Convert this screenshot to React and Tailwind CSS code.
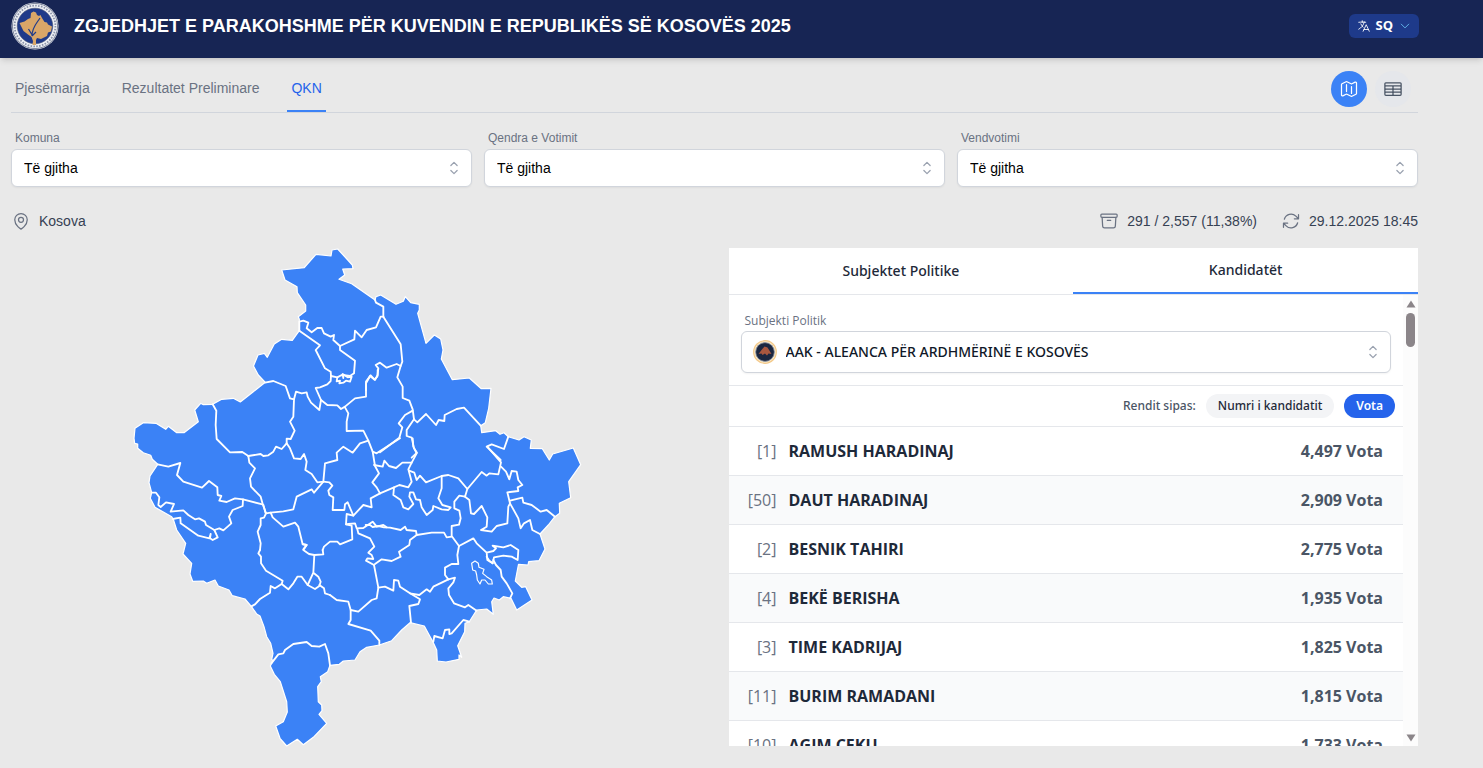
import { useState } from 'react';
import {
  HiOutlineArchiveBox,
  HiOutlineArrowPath,
  HiOutlineChevronDown,
  HiOutlineChevronUpDown,
  HiOutlineLanguage,
  HiOutlineMap,
  HiOutlineMapPin,
  HiOutlineTableCells,
} from 'react-icons/hi2';

const tabs = ["Pjesëmarrja", "Rezultatet Preliminare", "QKN"];

const filters = [
  { id: "komuna", label: "Komuna" },
  { id: "qendra", label: "Qendra e Votimit" },
  { id: "vendvotimi", label: "Vendvotimi" },
];

const candidates = [
  { number: 1, name: "RAMUSH HARADINAJ", votes: 4497 },
  { number: 50, name: "DAUT HARADINAJ", votes: 2909 },
  { number: 2, name: "BESNIK TAHIRI", votes: 2775 },
  { number: 4, name: "BEKË BERISHA", votes: 1935 },
  { number: 3, name: "TIME KADRIJAJ", votes: 1825 },
  { number: 11, name: "BURIM RAMADANI", votes: 1815 },
  { number: 10, name: "AGIM ÇEKU", votes: 1733 },
];

// outer border of Kosovo
const outline =
  "281.7,270 304.3,267.7 316,254.3 331,256 332,250 337.7,249 352.3,265 353,268.7 342.7,269 344.7,275 339,279.3 351.7,283.7 375,300 376,296.7 380.7,295 396,304.3 403.3,301.3 405.3,296.7 410.7,302.7 419.3,304.3 419.3,310 417.7,313.3 426,343.3 434.3,335 440.7,339 443,350 441.3,359 452.3,379.7 469.3,378 481.3,388.7 491,388.3 488.7,408.3 485.3,422.7 480.7,425.7 481.7,432.7 495.7,430.7 500,434.3 504,432.7 508.3,436.7 519,440 524,436.7 531.3,440 530.3,448.3 542.3,448.7 549.3,460 552.7,454 573.3,448 580.7,464.7 568.7,481.7 570.7,497.7 559.3,503.3 559.7,513.3 554.3,517.3 548.3,525 540,534 545,549 539,560.7 528.7,561.7 528,565 518.5,564.3 515.3,581 521.7,587.3 525.7,586.7 532,600 516.7,610 511,598.3 503.3,596.7 499.3,600 494,598 491.7,601.7 493.3,614.3 486.7,609 476.7,610 469.3,621.7 465,623.3 464.7,631.7 457.7,645.7 461.7,657.3 459,655 459,659.3 446,662 437.3,661 436.7,650 433,642 424.3,626 410,622.7 401.7,630 391.7,640.7 379.3,645 366.7,647.3 360,651.7 355,660 343.3,661 339.3,664.3 330,665.3 327.7,671.7 320.3,676.7 321.3,681.7 317.7,686.7 318.3,701.7 321.7,705 322,710.7 319,714.3 326.7,723.3 313.3,737.3 303.3,744.7 297.3,739.3 286.7,746 280,738.3 275.7,726 283.3,721.7 287.3,712 286.7,701.7 280.3,681.7 274.3,674.3 270.3,666 273,660.7 271.7,659.3 273,653.3 270.7,643.3 266.7,636.7 264,626.7 260,616 256.7,614 251.3,606.3 245,599 232.3,595.7 229,590 218.3,586 215,580 206.7,583.3 203.3,581 192.7,581.3 190,574 191.7,563.3 183,554 185.7,543.3 176.7,530 173.3,519.3 171.7,516.7 155,507.3 150.3,498.3 151.7,492.7 149,482.7 150,476 157.7,464.3 152.3,459.3 150.7,455.3 143.3,452.7 137.7,448.3 137.7,444 134.7,443.3 134,438.3 135,428.3 143.3,422.7 156,423.3 165.7,429.3 168.3,426.3 176.7,432.7 184,432.7 198.3,421.7 194.7,410 200.7,403.3 203.3,404.7 212.7,404.3 221.7,399.3 233.3,398.3 240.3,402 253.3,391.7 265.3,382.3 258.3,375 253.5,366 258,355 264.3,353.3 267.3,357.3 274.3,344 281.7,339.3 292.3,340.3 299.3,330.7 299.3,319.3 298.3,316.7 305.7,311 305.7,305 297.3,292.7 297,286.7 285,280";

// municipality borders, grouped by part of the map
const borders = [
  {
    area: "north",
    origin: "translate(780 720)",
    lines: [
      "345,180 348,188 370,200 370,230",
      "370,230 362,230 348,262 320,270 305,292 285,272 283,298 240,318 220,300 222,285 212,290 192,280 185,264 172,264 155,277 140,265 145,248 130,242 118,245 118,272",
      "370,230 422,313 427,365 422,378 410,372 380,383 360,368 347,375 355,385 352,410 343,418 332,406 318,425 318,450",
      "118,272 180,316 167,330 195,385 212,395 213,408",
      "240,318 240,330 285,362 282,400 270,408 258,406 245,405 232,412 213,408",
      "232,412 230,424 240,422 238,430 250,428 258,422 270,425 275,410 263,412 248,402 250,414",
    ],
  },
  {
    area: "north-east",
    origin: "translate(1140 870)",
    lines: [
      "62,228 52,262 68,290 68,324 88,332 98,358 102,388",
      "102,388 112,397 138,372 168,405 176,390 193,393 194,375 230,357 252,353 302,407",
      "98,362 75,375 56,400 67,412 58,443 0,487",
      "102,388 80,420 80,438 95,443 102,475 111,488 95,503",
      "385,440 372,477 335,463 320,470 362,510",
    ],
  },
  {
    area: "west",
    origin: "translate(360 1110)",
    lines: [
      "278,103 289,122 287,165 290,207 330,247 367,246 385,258",
      "113,283 145,290 181,279 171,315 190,335 246,353 267,333 292,352 293,375 304,378 298,392 320,396 345,385 369,388 430,404 437,430",
      "369,388 368,408 338,420 327,440 334,460 310,481 298,475 283,480",
      "95,368 108,368 118,382 115,405 122,411 138,397 162,402 152,425 190,421 205,435 225,448 237,445 255,455 258,465 283,480 293,502 278,510 270,505 272,492 268,505 235,497 182,460 181,443 158,447",
    ],
  },
  {
    area: "centre",
    origin: "translate(720 1110)",
    lines: [
      "75,38 100,33 137,48 150,85 162,88 160,140 150,155 164,182 152,207 140,206 140,220",
      "162,88 168,65 185,70 200,67 203,80 213,98 238,120 243,90 227,54 240,52 262,43 272,33 273,18",
      "243,90 262,105 292,106 303,117 315,110 345,85 378,80 378,40 390,18 405,30 413,15 413,0",
      "315,112 325,130 320,155 320,183 370,182 385,212 398,245 410,250 480,205",
      "385,212 360,220 338,248 310,230 290,248 292,270 255,280 250,335 232,337 215,312 196,300 200,275 192,252 182,267 162,265 150,235 140,220",
      "140,220 125,237 108,230 100,245 85,256 70,258 62,252 25,258",
      "25,258 28,278 45,295 30,325 33,350 62,380 68,402 78,430 92,428 130,424 160,418 170,380 215,358 222,368 250,335",
      "78,430 72,443 62,445 62,465 53,485 62,520 60,540",
      "92,428 98,442 130,470 165,458 175,470 188,523 200,525 190,538",
      "250,335 268,337 277,347 265,362 268,375 280,382 278,420 313,420 315,403 323,397 340,437 370,405 395,412 392,385 420,370",
      "398,245 405,288 417,310 397,337 410,352 420,370",
      "340,437 320,432 318,463 335,467 337,508 300,523 292,515 270,515 252,530 248,540",
      "318,463 325,462 345,460 350,475 370,474 398,455 410,470 430,465 440,472",
    ],
  },
  {
    area: "east",
    origin: "translate(1110 1290)",
    lines: [
      "12,105 38,110 43,92 57,108 78,114 97,98 125,98",
      "30,190 72,172 88,165 115,172 125,155 117,125 115,118 125,98 140,70 130,50 128,25",
      "117,122 133,128 140,150 150,137 168,157 215,138 235,135 265,145 292,177 335,126 350,137 358,130 385,133 393,97 352,50",
      "215,138 215,175 205,205 217,225 242,232 235,240 215,238 190,228 188,240 170,255 155,232 150,210 138,208 130,187 120,187 118,200 130,222 115,238 100,232 92,210 70,195 72,172",
      "292,177 285,200 268,197 253,215 253,235 268,242 272,265 267,284 245,288 245,318 267,348",
      "285,200 298,210 303,250 312,252 335,228 352,262 350,290 333,300 365,305 380,288 412,280 415,230 420,220 412,187 445,183 443,172 457,165 445,150 440,125 425,123 418,148 408,125 393,110",
      "420,212 457,203 460,218 485,225 512,245 530,240 555,260",
      "420,220 445,265 452,295 462,280 480,270 487,300 510,312",
      "-13,285 0,285 8,291 25,288 42,292 60,293 92,300 105,290 110,300 138,303 140,315 185,308 222,308 230,322 245,320",
      "140,315 120,330 118,345 87,365 92,380 65,393 35,388 15,402",
      "267,348 310,325 320,340 350,368 370,363 378,355 368,347 400,352 422,345 445,360 443,390 425,380 400,377 372,382 368,400 352,390 350,368",
    ],
  },
  {
    area: "south-east",
    origin: "translate(990 1560)",
    lines: [
      "387,78 382,105 385,132 365,132 345,143 345,165 355,178",
      "355,178 335,188 310,200 300,215 290,208 268,225 240,220 210,200 205,182 192,180 190,212 165,200 145,203 132,135",
      "355,178 375,173 370,187 355,205 357,225 372,250 405,262 415,255 440,272",
      "132,135 108,122 112,115 130,117 125,105 115,98 133,80 120,55 85,40 82,28",
      "145,203 140,235 125,240 85,275 62,270 62,300 55,312 122,332 148,362 148,375",
      "0,225 20,240 55,245 62,270",
      "240,220 270,238 265,252 238,258 243,308",
      "310,365 313,348 338,355 345,330 358,328 358,342 365,340 400,300 418,305",
      "490,120 498,135 512,150 515,170 530,190 547,220 540,235",
      "488,130 478,122 470,110",
    ],
  },
  {
    area: "south",
    origin: "translate(480 1500)",
    lines: [
      "488,150 490,163 463,165 447,162 430,150 440,135 428,132",
      "463,165 460,218 475,230 482,245 478,258 465,267 443,255 460,218",
      "300,150 295,160 303,170 303,190 318,212 368,242 365,252 385,268 400,250 412,230 425,230 443,255",
      "365,252 345,265 332,258 330,278 300,297 285,313 274,319",
      "478,255 492,265 495,280 510,285",
      "334,490 355,463 370,460 375,450 400,432 440,426 455,438 478,440 495,432 505,460 510,496",
    ],
  },
];

const KosovoMap = () => (
  <svg viewBox="393 744 1350 1494" className="h-full max-w-full overflow-visible" role="img" aria-label="Kosova">
    <polygon points={outline} transform="scale(3)" fill="#3b82f6" stroke="#fff" strokeWidth="1.2" strokeLinejoin="round" />
    <g fill="none" stroke="#fff" strokeWidth="5.5" strokeLinejoin="round" strokeLinecap="round">
      {borders.map((part) => (
        <g key={part.area} transform={part.origin}>
          {part.lines.map((points) => (
            <polyline key={points} points={points} />
          ))}
        </g>
      ))}
      {/* small enclave in the south-east */}
      <polygon
        transform="translate(990 1560)"
        strokeWidth="3.5"
        points="425,130 435,123 445,130 447,142 462,148 458,160 470,170 485,180 487,192 475,192 465,180 455,180 450,192 442,180 440,165 437,153 428,150"
      />
    </g>
  </svg>
)

const Emblem = () => (
  <svg viewBox="0 0 48 48" className="size-12 shrink-0" aria-hidden="true">
    <circle cx="24" cy="24" r="23.5" fill="#eef0f4" />
    <circle cx="24" cy="24" r="22.6" fill="none" stroke="#4b5675" strokeWidth="0.7" />
    <circle cx="24" cy="24" r="20.4" fill="none" stroke="#8d95ab" strokeWidth="1.8" strokeDasharray="1.6 1.3" />
    <circle cx="24" cy="24" r="17.8" fill="#1f3a8a" stroke="#4b5675" strokeWidth="0.6" />
    <path
      d="M20 11l2.500-1.500 2.500 1 1 2.500 2 1 1.500-1 1.500 3 2.500 4 2.500.5 1 2 4 2-1 5-3 1-1 3.500-3 1.500-3 1.500-4-1-1 2v5h-3.500l.5-4-1.500-4-3.500-2.500-4.500-3.500-2-4-2-4 5-1.500 3.500-2.500 2.500-1z"
      fill="#d9a668"
    />
    <path d="M29 16c-3 5-8 9-8 18M17.500 27l4 6.500 3.500-3.500" fill="none" stroke="#1f3a8a" strokeWidth="1.2" />
  </svg>
)

const PartyLogo = () => (
  <svg viewBox="0 0 24 24" className="size-6" aria-hidden="true">
    <circle cx="12" cy="12" r="11.3" fill="#fdebc8" stroke="#f3c98b" strokeWidth="1.2" />
    <circle cx="12" cy="12" r="9.4" fill="#1c2740" stroke="#8f98a8" strokeWidth="0.8" />
    <path d="M5.500 14l3-4 3-3.500 3 1 2.500 4 1.500 2.500-3-.5-1.500 2-2-2-2.500 1.500-1-1.500z" fill="#a9573f" />
  </svg>
)

const FilterSelect = ({ id, label }) => (
  <div className="flex flex-col">
    <label htmlFor={id} className="mb-[3px] ml-1 text-xs text-gray-500">{label}</label>
    <div className="relative">
      <select
        id={id}
        className="h-[38px] w-full appearance-none rounded-md border border-gray-300 bg-white pl-3 pr-10 text-sm text-black shadow-xs"
      >
        <option>Të gjitha</option>
      </select>
      <HiOutlineChevronUpDown className="pointer-events-none absolute right-2 top-[9px] size-5 text-gray-400" />
    </div>
  </div>
)

const App = () => {
  const [activeTab, setActiveTab] = useState("QKN");
  const [sortBy, setSortBy] = useState("votes");

  const sorted = [...candidates].sort((a, b) =>
    sortBy === "votes" ? b.votes - a.votes : a.number - b.number
  );

  return (
    <div className="min-h-screen bg-[#e9e9e9] font-['Liberation_Sans',Arial,sans-serif]">
      <header className="flex h-[58px] items-center bg-[#172554] pb-1.5 pl-[11px] pr-16 shadow-md">
        <Emblem />
        <h1 className="ml-[15px] flex-1 text-lg font-bold text-white">
          ZGJEDHJET E PARAKOHSHME PËR KUVENDIN E REPUBLIKËS SË KOSOVËS 2025
        </h1>
        <button className="flex h-6 items-center rounded-md bg-[#1e3a8a] px-2 font-['Open_Sans',sans-serif] text-[13px] font-bold text-white">
          <HiOutlineLanguage className="mr-1 size-3.5" />
          SQ
          <HiOutlineChevronDown className="ml-1.5 size-3 text-sky-300" />
        </button>
      </header>

      <main className="pl-[11px] pr-[65px]">
        <div className="flex h-[55px] items-stretch justify-between border-b border-gray-300">
          <nav className="flex gap-6">
            {tabs.map((tab) => (
              <button
                key={tab}
                onClick={() => setActiveTab(tab)}
                className={
                  tab === activeTab
                    ? "border-b-2 border-[#3b82f6] px-1 pt-2 text-sm text-[#2563eb]"
                    : "border-b-2 border-transparent px-1 pt-2 text-sm text-gray-500"
                }
              >
                {tab}
              </button>
            ))}
          </nav>
          <div className="flex items-center gap-2 pr-[7px] pt-2">
            <button aria-label="Harta" className="flex size-9 items-center justify-center rounded-full bg-[#3b82f6] text-white">
              <HiOutlineMap className="size-5" />
            </button>
            <button aria-label="Tabela" className="flex size-9 items-center justify-center rounded-full bg-[#e5e7eb] text-gray-600">
              <HiOutlineTableCells className="size-5" />
            </button>
          </div>
        </div>

        <div className="grid grid-cols-3 gap-3 pt-[17px]">
          {filters.map((f) => (
            <FilterSelect key={f.id} id={f.id} label={f.label} />
          ))}
        </div>

        <div className="mt-6 flex items-center justify-between text-sm text-gray-700">
          <span className="flex items-center gap-2">
            <HiOutlineMapPin className="size-5 text-gray-500" />
            Kosova
          </span>
          <div className="flex items-center gap-6">
            <span className="flex items-center gap-2">
              <HiOutlineArchiveBox className="size-5 text-gray-500" />
              291 / 2,557 (11,38%)
            </span>
            <span className="flex items-center gap-2">
              <HiOutlineArrowPath className="size-5 text-gray-500" />
              29.12.2025 18:45
            </span>
          </div>
        </div>

        <div className="mt-[17px] grid h-[calc(100vh-270px)] grid-cols-2 gap-7">
          <div className="flex min-h-0 justify-center">
            <KosovoMap />
          </div>

          <section className="flex min-h-0 flex-col bg-white font-['Noto_Sans',sans-serif] text-gray-800">
            <div className="grid h-[47px] shrink-0 grid-cols-2 border-b border-gray-200 text-sm font-medium">
              <button>Subjektet Politike</button>
              <button className="border-b-2 border-[#3b82f6]">Kandidatët</button>
            </div>

            <div className="flex min-h-0 flex-1">
              <div className="min-w-0 flex-1 overflow-hidden">
                <div className="border-b border-gray-200 px-3 pb-3 pt-[18px]">
                  <label htmlFor="subjekti" className="mb-0.5 ml-1 block font-['Open_Sans',sans-serif] text-xs text-gray-500">Subjekti Politik</label>
                  <div className="relative">
                    <select
                      id="subjekti"
                      className="h-[42px] w-full appearance-none rounded-md border border-gray-300 bg-white pl-11 pr-10 text-sm font-medium text-gray-900 shadow-xs"
                    >
                      <option>AAK - ALEANCA PËR ARDHMËRINË E KOSOVËS</option>
                    </select>
                    <span className="pointer-events-none absolute left-3 top-[9px]">
                      <PartyLogo />
                    </span>
                    <HiOutlineChevronUpDown className="pointer-events-none absolute right-2 top-[11px] size-5 text-gray-400" />
                  </div>
                </div>

                <div className="flex h-10 items-center justify-end pr-2 text-xs font-medium">
                  <span className="mr-2.5 text-gray-600">Rendit sipas:</span>
                  <button
                    onClick={() => setSortBy("number")}
                    className={
                      sortBy === "number"
                        ? "h-6 rounded-full bg-[#2563eb] px-3 font-bold text-white"
                        : "h-6 rounded-full bg-gray-100 px-3 text-gray-800"
                    }
                  >
                    Numri i kandidatit
                  </button>
                  <button
                    onClick={() => setSortBy("votes")}
                    className={
                      sortBy === "votes"
                        ? "ml-2.5 h-6 rounded-full bg-[#2563eb] px-3 font-semibold text-white"
                        : "ml-2.5 h-6 rounded-full bg-gray-100 px-3 text-gray-800"
                    }
                  >
                    Vota
                  </button>
                </div>

                <table className="w-full font-['Open_Sans',sans-serif]">
                  <tbody>
                    {sorted.map((c) => (
                      <tr key={c.number} className="h-[49px] border-t border-gray-200 even:bg-gray-50">
                        <td className="w-12 text-right text-gray-500">[{c.number}]</td>
                        <td className="pl-3 font-bold">{c.name}</td>
                        <td className="pr-5 text-right font-bold text-gray-600">
                          {c.votes.toLocaleString("en-US")} Vota
                        </td>
                      </tr>
                    ))}
                  </tbody>
                </table>
              </div>

              {/* scrollbar */}
              <div className="flex w-[15px] shrink-0 flex-col items-center bg-[#fcfcfc] py-1">
                <svg viewBox="0 0 10 8" className="mt-px h-2 w-2.5" fill="#8b8589"><path d="M5 0.500L9.500 7.500H.5z" /></svg>
                <div className="mt-[5px] h-[34px] w-[9px] rounded-full bg-[#8b8589]" />
                <svg viewBox="0 0 10 8" className="mt-auto h-2 w-2.5" fill="#8b8589"><path d="M5 7.500L9.500.5H.5z" /></svg>
              </div>
            </div>
          </section>
        </div>
      </main>
    </div>
  )
}

export default App;
